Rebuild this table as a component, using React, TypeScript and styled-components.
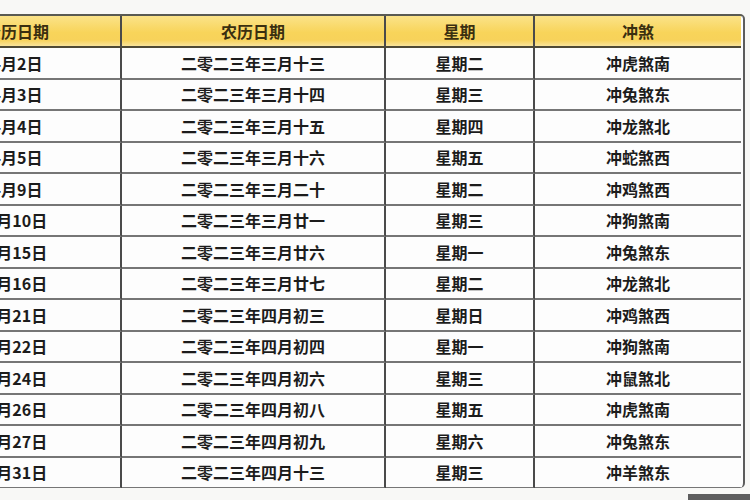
import React from 'react';
import styled, { createGlobalStyle } from 'styled-components';

interface DayRow {
  date: string;
  lunar: string;
  week: string;
  clash: string;
}

const rows: DayRow[] = [
  { date: '4月2日', lunar: '二零二三年三月十三', week: '星期二', clash: '冲虎煞南' },
  { date: '4月3日', lunar: '二零二三年三月十四', week: '星期三', clash: '冲兔煞东' },
  { date: '4月4日', lunar: '二零二三年三月十五', week: '星期四', clash: '冲龙煞北' },
  { date: '4月5日', lunar: '二零二三年三月十六', week: '星期五', clash: '冲蛇煞西' },
  { date: '4月9日', lunar: '二零二三年三月二十', week: '星期二', clash: '冲鸡煞西' },
  { date: '4月10日', lunar: '二零二三年三月廿一', week: '星期三', clash: '冲狗煞南' },
  { date: '4月15日', lunar: '二零二三年三月廿六', week: '星期一', clash: '冲兔煞东' },
  { date: '4月16日', lunar: '二零二三年三月廿七', week: '星期二', clash: '冲龙煞北' },
  { date: '5月21日', lunar: '二零二三年四月初三', week: '星期日', clash: '冲鸡煞西' },
  { date: '5月22日', lunar: '二零二三年四月初四', week: '星期一', clash: '冲狗煞南' },
  { date: '5月24日', lunar: '二零二三年四月初六', week: '星期三', clash: '冲鼠煞北' },
  { date: '5月26日', lunar: '二零二三年四月初八', week: '星期五', clash: '冲虎煞南' },
  { date: '5月27日', lunar: '二零二三年四月初九', week: '星期六', clash: '冲兔煞东' },
  { date: '5月31日', lunar: '二零二三年四月十三', week: '星期三', clash: '冲羊煞东' },
];

const headers = ['公历日期', '农历日期', '星期', '冲煞'];

const GlobalStyle = createGlobalStyle`
  html, body {
    margin: 0;
    padding: 0;
    background: #f8f8f6;
    overflow: hidden;
  }
  body {
    font-family: "Noto Sans CJK SC", "Noto Sans", sans-serif;
  }
`;

const Page = styled.div`
  width: 750px;
  height: 500px;
  overflow: hidden;
  padding-top: 14px;
  box-sizing: border-box;
  display: flex;
  flex-direction: column;
`;

const Table = styled.div`
  margin-left: -86px;
  width: 829px;
  display: grid;
  grid-template-columns: 208px 264px 149px 206px;
  grid-template-rows: 32px repeat(14, 31.5px);
  border-top: 2px solid #5a5a52;
  border-right: 2px solid #5c5c5c;
  border-radius: 0 5px 5px 0;
  overflow: hidden;
  background: #fdfdfd;
  box-sizing: content-box;
`;

const Cell = styled.div<{ $head?: boolean; $last?: boolean }>`
  box-sizing: border-box;
  display: flex;
  align-items: center;
  justify-content: center;
  font-size: 16px;
  font-weight: 700;
  border-bottom: 2px solid ${p => (p.$head ? '#4f4a35' : '#767676')};
  border-right: ${p => (p.$last ? 'none' : '2px solid #4a4a4a')};
  background: ${p =>
    p.$head
      ? 'linear-gradient(180deg, #fbe389 0%, #f8d45a 55%, #f7d25a 80%, #fae49a 100%)'
      : '#fdfdfd'};
  color: ${p => (p.$head ? '#3a2f10' : '#1c1c1c')};
`;

const Footer = styled.div`
  display: flex;
  justify-content: flex-end;
  margin-top: 6px;
`;

const Bar = styled.div`
  width: 62px;
  height: 6px;
  background: #5e5e5e;
`;

export default function App() {
  return (
    <>
      <GlobalStyle />
      <Page>
        <Table>
          {headers.map((h, i) => (
            <Cell key={h} $head $last={i === headers.length - 1}>
              {h}
            </Cell>
          ))}
          {rows.map(r => (
            <React.Fragment key={r.date}>
              <Cell>{r.date}</Cell>
              <Cell>{r.lunar}</Cell>
              <Cell>{r.week}</Cell>
              <Cell $last>{r.clash}</Cell>
            </React.Fragment>
          ))}
        </Table>
        <Footer>
          <Bar />
        </Footer>
      </Page>
    </>
  );
}
